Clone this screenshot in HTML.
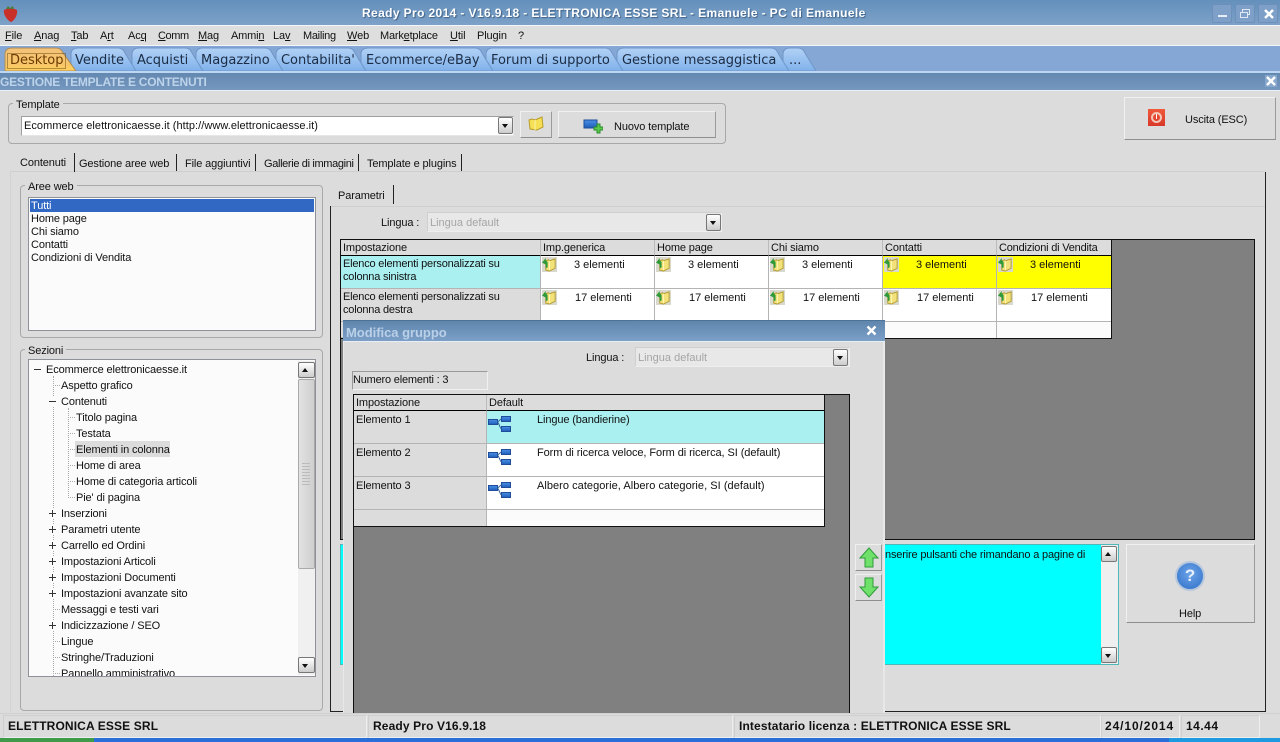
<!DOCTYPE html>
<html><head><meta charset="utf-8"><title>Ready Pro</title>
<style>
html,body{margin:0;padding:0;width:1280px;height:742px;overflow:hidden;background:#dcdcdc}
body{position:relative;font:11px/17px "Liberation Sans",Arial,sans-serif;color:#111;letter-spacing:-.12px}
div,span,svg{position:absolute;display:block;box-sizing:border-box}
.t{white-space:nowrap}
u{text-decoration:underline}
.m{top:28px}
.tl{top:53px;font:13px/16px "DejaVu Sans",sans-serif;color:#1c2c44;white-space:nowrap;letter-spacing:-.02px}
.grp{border:1px solid #a8a8a8;border-radius:4px}
.lg{background:#dcdcdc;padding:0 3px;white-space:nowrap;height:14px;line-height:17px;overflow:visible}
.btn{background:#dcdcdc;border:1px solid;border-color:#f0f0f0 #9a9a9a #8e8e8e #f0f0f0}
.combo{background:#fff;border:1px solid #a0a0a0;border-bottom-color:#e6e6e6;border-right-color:#e6e6e6}
.dd{width:15px;height:17px;border:1px solid #777;border-radius:2px;background:linear-gradient(#fff,#ccc)}
.dd:after{content:"";position:absolute;left:3px;top:6px;border:3.5px solid transparent;border-top:4px solid #111;border-bottom:0}
.ddu:after{content:"";position:absolute;left:3px;top:5px;border:3.5px solid transparent;border-bottom:4px solid #111;border-top:0}
.ddu{width:15px;height:15px;border:1px solid #777;border-radius:2px;background:linear-gradient(#fff,#ccc)}
.cell{background:#fff;border-right:1px solid #b4b4b4;border-bottom:1px solid #b4b4b4}
.hd{background:#dcdcdc;border-right:1px solid #bbb;border-bottom:1px solid #000;padding:0 0 0 2px;white-space:nowrap;line-height:15px;padding-top:1px}
.gr{background:#dcdcdc;border-right:1px solid #b4b4b4;border-bottom:1px solid #b4b4b4;padding:1px 0 0 2px;white-space:nowrap}
.wr{line-height:13px;padding-top:2px;letter-spacing:-.2px}
.tree{left:0;white-space:nowrap}
.dot{border-left:1px dotted #aaa}
.dh{border-top:1px dotted #aaa;height:1px}
.pm{width:9px;height:9px;background:#fbfbfb}
.pm:before{content:"";position:absolute;left:1px;top:4px;width:7px;height:1px;background:#333}
.pl:after{content:"";position:absolute;left:4px;top:1px;width:1px;height:7px;background:#333}
.st{top:719px;font:bold 12px/14px "Liberation Sans",sans-serif;letter-spacing:.13px;color:#111;white-space:nowrap}
.sp{top:715px;height:23px;border:1px solid #cfcfcf;border-right-color:#eee;border-bottom-color:#eee}
</style></head><body>
<svg width="0" height="0" style="left:0;top:0"><defs>
<linearGradient id="bb" x1="0" x2="0" y1="0" y2="1"><stop offset="0" stop-color="#4a90e6"/><stop offset="1" stop-color="#1f5cb8"/></linearGradient>
<symbol id="fld" viewBox="0 0 16 16"><rect width="16" height="16" fill="#d8d8cc"/><path d="M4 14V4l3-1 1 1 6-2v10l-6 3z" fill="#f3e27a" stroke="#b39a2c"/><path d="M8 4v10" stroke="#fff6b8"/><path d="M0 6l4-5v3c1 0 2 1 2 2v5l-2 1V8z" fill="#2e9a3a"/></symbol>
<symbol id="tre" viewBox="0 0 23 19"><rect x=".5" y="5.5" width="9" height="5" fill="url(#bb)" stroke="#1f4d99"/><rect x="13.5" y="2.5" width="9" height="5" fill="url(#bb)" stroke="#1f4d99"/><rect x="13.5" y="12.5" width="9" height="5" fill="url(#bb)" stroke="#1f4d99"/><path d="M9 8c2 0 3-3 4.500-3M9 8c2 0 3 7 4.500 7" stroke="#2f5f9c" fill="none"/></symbol>
</defs></svg>

<!-- title bar -->
<div style="left:0;top:0;width:1280px;height:25px;background:linear-gradient(#6390bb,#7da1c8)"></div>
<div style="left:0;top:25px;width:1280px;height:1px;background:#f2f6fa"></div>
<svg style="left:3px;top:4px" width="15" height="18" viewBox="0 0 15 18"><path d="M1 6c3-2 10-2 13 0 1 5-3 11-6 12C5 17 0 11 1 6z" fill="#c9302a"/><path d="M3 5l2-3 2 2 3-2 1 3z" fill="#4f7a3a"/></svg>
<div class="t" style="left:362px;top:6px;font:bold 12px/15px 'Liberation Sans',sans-serif;color:#fff;letter-spacing:.38px;text-shadow:1px 1px 1px #3d5f85">Ready Pro 2014 - V16.9.18 - ELETTRONICA ESSE SRL - Emanuele - PC di Emanuele</div>
<div style="left:1212px;top:4px;width:20px;height:19px;background:#7ea0c8;border:1px solid #6d90ba;border-radius:2px"><div style="left:5px;top:10px;width:9px;height:2px;background:#e8eef5"></div></div>
<div style="left:1235px;top:4px;width:20px;height:19px;background:#7ea0c8;border:1px solid #6d90ba;border-radius:2px"><div style="left:6px;top:4px;width:8px;height:6px;border:1px solid #dfe8f2"></div><div style="left:4px;top:7px;width:8px;height:6px;border:1px solid #dfe8f2;background:#7ea0c8"></div></div>
<div style="left:1258px;top:4px;width:20px;height:19px;background:#7ea0c8;border:1px solid #6d90ba;border-radius:2px"><svg style="left:5px;top:4px" width="10" height="10"><path d="M1 1l8 8M9 1l-8 8" stroke="#fff" stroke-width="2.4"/></svg></div>

<!-- menu -->
<div style="left:0;top:26px;width:1280px;height:19px;background:#dedede"></div>
<div style="left:0;top:45px;width:1280px;height:1px;background:#f2f6fa"></div>
<div class="t m" style="left:5px"><u>F</u>ile</div>
<div class="t m" style="left:34px"><u>A</u>nag</div>
<div class="t m" style="left:71px"><u>T</u>ab</div>
<div class="t m" style="left:100px">A<u>r</u>t</div>
<div class="t m" style="left:128px">Ac<u>q</u></div>
<div class="t m" style="left:158px;letter-spacing:-.4px"><u>C</u>omm</div>
<div class="t m" style="left:198px"><u>M</u>ag</div>
<div class="t m" style="left:231px;letter-spacing:-.2px">Ammi<u>n</u></div>
<div class="t m" style="left:273px">La<u>v</u></div>
<div class="t m" style="left:303px;letter-spacing:-.3px">Mailin<u>g</u></div>
<div class="t m" style="left:347px"><u>W</u>eb</div>
<div class="t m" style="left:380px;letter-spacing:-.2px">Mark<u>e</u>tplace</div>
<div class="t m" style="left:450px"><u>U</u>til</div>
<div class="t m" style="left:477px">Plugin</div>
<div class="t m" style="left:518px">?</div>

<!-- tab bar -->
<div style="left:0;top:46px;width:1280px;height:25px;background:#84a7d6"></div>
<div style="left:0;top:71px;width:1280px;height:2px;background:#bcd6f4"></div>
<svg style="left:0;top:46px" width="830" height="25" viewBox="0 0 830 25">
<defs><linearGradient id="g1" x1="0" x2="0" y1="0" y2="1"><stop offset="0" stop-color="#b2d2f6"/><stop offset="1" stop-color="#7fb1ea"/></linearGradient><linearGradient id="g2" x1="0" x2="0" y1="0" y2="1"><stop offset="0" stop-color="#f4c27a"/><stop offset=".7" stop-color="#f8c66a"/><stop offset="1" stop-color="#ffd15c"/></linearGradient></defs>
<path d="M783 25V7q1-5 7-5h8q5 0 7 5l11 18z" fill="url(#g1)" stroke="#6f96c8"/>
<path d="M617 25V7q1-5 7-5h147q5 0 7 5l11 18z" fill="url(#g1)" stroke="#6f96c8"/>
<path d="M486 25V7q1-5 7-5h112q5 0 7 5l11 18z" fill="url(#g1)" stroke="#6f96c8"/>
<path d="M361 25V7q1-5 7-5h107q5 0 7 5l11 18z" fill="url(#g1)" stroke="#6f96c8"/>
<path d="M276 25V7q1-5 7-5h65q5 0 7 5l11 18z" fill="url(#g1)" stroke="#6f96c8"/>
<path d="M196 25V7q1-5 7-5h62q5 0 7 5l11 18z" fill="url(#g1)" stroke="#6f96c8"/>
<path d="M132 25V7q1-5 7-5h46q5 0 7 5l11 18z" fill="url(#g1)" stroke="#6f96c8"/>
<path d="M71 25V7q1-5 7-5h40q5 0 7 5l11 18z" fill="url(#g1)" stroke="#6f96c8"/>
<path d="M5 25V7q1-5 7-5h44q5 0 7 5l13 18z" fill="url(#g2)" stroke="#b08d55"/>
<rect x="7.500" y="7.500" width="58" height="15" fill="none" stroke="#6b4a10" stroke-dasharray="1 1"/>
</svg>
<div class="tl" style="left:10px;color:#6a3b00">Desktop</div>
<div class="tl" style="left:75px">Vendite</div>
<div class="tl" style="left:137px">Acquisti</div>
<div class="tl" style="left:201px">Magazzino</div>
<div class="tl" style="left:281px">Contabilita'</div>
<div class="tl" style="left:366px">Ecommerce/eBay</div>
<div class="tl" style="left:491px">Forum di supporto</div>
<div class="tl" style="left:622px">Gestione messaggistica</div>
<div class="tl" style="left:789px">...</div>

<!-- header -->
<div style="left:0;top:73px;width:1280px;height:17px;background:linear-gradient(#6388b0,#7597bf)"></div>
<div style="left:0;top:90px;width:1280px;height:1px;background:#e8eef5"></div>
<div class="t" style="left:0;top:75px;font:bold 12px/14px 'Liberation Sans',sans-serif;color:#bdd3ea;letter-spacing:-.25px">GESTIONE TEMPLATE E CONTENUTI</div>
<div style="left:1265px;top:75px;width:12px;height:12px;background:#87a7cd"><svg style="left:1px;top:1px" width="10" height="10"><path d="M1 1l8 8M9 1l-8 8" stroke="#fff" stroke-width="2.4"/></svg></div>

<!-- template group -->
<div class="grp" style="left:8px;top:103px;width:718px;height:41px"></div>
<div class="lg" style="left:13px;top:97px">Template</div>
<div class="combo" style="left:21px;top:116px;width:493px;height:20px"></div>
<div class="t" style="left:24px;top:118px;letter-spacing:.05px">Ecommerce elettronicaesse.it (http://www.elettronicaesse.it)</div>
<div class="dd" style="left:498px;top:117px"></div>
<div class="btn" style="left:520px;top:111px;width:32px;height:27px"></div>
<svg style="left:528px;top:115px" width="16" height="16" viewBox="0 0 16 16"><path d="M2 14l-1-9 3-1 3 1 7-3 1 10-6 3z" fill="#f5df55" stroke="#b79c2a"/><path d="M7 5v10" stroke="#fff6a8"/></svg>
<div class="btn" style="left:558px;top:111px;width:158px;height:27px"></div>
<svg style="left:583px;top:119px" width="20" height="15" viewBox="0 0 20 15"><rect x="1" y="1" width="13" height="8" fill="url(#bb)" stroke="#1f4d99"/><path d="M14 5h3v3h3v3h-3v3h-3v-3h-3V8h3z" fill="#5ccb4d" stroke="#2c8a2c"/></svg>
<div class="t" style="left:614px;top:119px">Nuovo template</div>
<div class="btn" style="left:1124px;top:97px;width:152px;height:43px"></div>
<div style="left:1148px;top:109px;width:17px;height:17px;background:linear-gradient(#f0593a,#d8382a)"><div style="left:3px;top:3px;width:11px;height:11px;border:2px solid #f4c8b8;border-radius:50%"></div><div style="left:8px;top:5px;width:1px;height:5px;background:#fff"></div></div>
<div class="t" style="left:1185px;top:112px">Uscita (ESC)</div>

<!-- main tabs -->
<div style="left:10px;top:171px;width:1255px;height:1px;background:#cfcfcf"></div>
<div class="t" style="left:20px;top:155px">Contenuti</div>
<div style="left:74px;top:153px;width:1px;height:19px;background:#222"></div>
<div class="t" style="left:79px;top:156px">Gestione aree web</div>
<div style="left:176px;top:154px;width:1px;height:17px;background:#222"></div>
<div class="t" style="left:185px;top:156px">File aggiuntivi</div>
<div style="left:255px;top:154px;width:1px;height:17px;background:#222"></div>
<div class="t" style="left:264px;top:156px;letter-spacing:-.35px">Gallerie di immagini</div>
<div style="left:358px;top:154px;width:1px;height:17px;background:#222"></div>
<div class="t" style="left:367px;top:156px">Template e plugins</div>
<div style="left:461px;top:154px;width:1px;height:17px;background:#222"></div>
<div style="left:10px;top:172px;width:1px;height:540px;background:#d2d2d2"></div>

<!-- aree web -->
<div class="grp" style="left:20px;top:185px;width:303px;height:153px"></div>
<div class="lg" style="left:25px;top:179px">Aree web</div>
<div style="left:28px;top:197px;width:288px;height:134px;background:#fbfbfb;border:1px solid #8e9298"></div>
<div style="left:30px;top:199px;width:284px;height:13px;background:#3068c4"></div>
<div class="t" style="left:31px;top:198px;color:#fff">Tutti</div>
<div class="t" style="left:31px;top:211px">Home page</div>
<div class="t" style="left:31px;top:224px">Chi siamo</div>
<div class="t" style="left:31px;top:237px">Contatti</div>
<div class="t" style="left:31px;top:250px">Condizioni di Vendita</div>

<!-- sezioni -->
<div class="grp" style="left:20px;top:349px;width:303px;height:362px"></div>
<div class="lg" style="left:25px;top:343px">Sezioni</div>
<div style="left:28px;top:359px;width:288px;height:318px;background:#fbfbfb;border:1px solid #8e9298;overflow:hidden">
 <div class="dot" style="left:24px;top:16px;width:1px;height:304px"></div>
 <div class="dot" style="left:39px;top:48px;width:1px;height:88px"></div>
 <div class="dh" style="left:24px;top:25px;width:7px"></div>
 <div class="dh" style="left:39px;top:57px;width:7px"></div><div class="dh" style="left:39px;top:73px;width:7px"></div><div class="dh" style="left:39px;top:89px;width:7px"></div><div class="dh" style="left:39px;top:105px;width:7px"></div><div class="dh" style="left:39px;top:121px;width:7px"></div><div class="dh" style="left:39px;top:137px;width:7px"></div>
 <div class="dh" style="left:24px;top:249px;width:7px"></div><div class="dh" style="left:24px;top:281px;width:7px"></div><div class="dh" style="left:24px;top:297px;width:7px"></div><div class="dh" style="left:24px;top:313px;width:7px"></div>
 <div class="pm" style="left:4px;top:5px"></div>
 <div class="pm" style="left:19px;top:37px"></div>
 <div class="pm pl" style="left:19px;top:149px"></div><div class="pm pl" style="left:19px;top:165px"></div><div class="pm pl" style="left:19px;top:181px"></div><div class="pm pl" style="left:19px;top:197px"></div><div class="pm pl" style="left:19px;top:213px"></div><div class="pm pl" style="left:19px;top:229px"></div><div class="pm pl" style="left:19px;top:261px"></div>
 <div style="left:46px;top:81px;width:95px;height:16px;background:#dcdcdc"></div>
 <div class="tree" style="left:17px;top:2px">Ecommerce elettronicaesse.it</div>
 <div class="tree" style="left:32px;top:18px">Aspetto grafico</div>
 <div class="tree" style="left:32px;top:34px">Contenuti</div>
 <div class="tree" style="left:47px;top:50px">Titolo pagina</div>
 <div class="tree" style="left:47px;top:66px">Testata</div>
 <div class="tree" style="left:47px;top:82px">Elementi in colonna</div>
 <div class="tree" style="left:47px;top:98px">Home di area</div>
 <div class="tree" style="left:47px;top:114px">Home di categoria articoli</div>
 <div class="tree" style="left:47px;top:130px">Pie' di pagina</div>
 <div class="tree" style="left:32px;top:146px">Inserzioni</div>
 <div class="tree" style="left:32px;top:162px">Parametri utente</div>
 <div class="tree" style="left:32px;top:178px">Carrello ed Ordini</div>
 <div class="tree" style="left:32px;top:194px">Impostazioni Articoli</div>
 <div class="tree" style="left:32px;top:210px">Impostazioni Documenti</div>
 <div class="tree" style="left:32px;top:226px">Impostazioni avanzate sito</div>
 <div class="tree" style="left:32px;top:242px">Messaggi e testi vari</div>
 <div class="tree" style="left:32px;top:258px">Indicizzazione / SEO</div>
 <div class="tree" style="left:32px;top:274px">Lingue</div>
 <div class="tree" style="left:32px;top:290px">Stringhe/Traduzioni</div>
 <div class="tree" style="left:32px;top:306px">Pannello amministrativo</div>
 <div style="left:269px;top:1px;width:17px;height:314px;background:#f0f0f0"></div>
 <div class="ddu" style="left:269px;top:2px;width:17px;height:16px"></div>
 <div style="left:269px;top:19px;width:17px;height:190px;background:linear-gradient(90deg,#e2e2e2,#cfcfcf);border:1px solid #aaa;border-radius:2px"></div>
 <div style="left:273px;top:103px;width:8px;height:24px;background:repeating-linear-gradient(#bbb 0 1px,transparent 1px 3px)"></div>
 <div class="dd" style="left:269px;top:297px;width:17px;height:16px"></div>
</div>

<!-- right panel -->
<div style="left:330px;top:206px;width:1px;height:506px;background:#222"></div>
<div style="left:330px;top:711px;width:936px;height:1px;background:#222"></div>
<div style="left:1265px;top:172px;width:1px;height:540px;background:#222"></div>
<div style="left:331px;top:206px;width:934px;height:1px;background:#cfcfcf"></div>
<div class="t" style="left:338px;top:188px">Parametri</div>
<div style="left:393px;top:185px;width:1px;height:19px;background:#222"></div>
<div class="t" style="left:381px;top:215px">Lingua :</div>
<div style="left:427px;top:212px;width:295px;height:20px;background:#e8e8e8;border:1px solid;border-color:#cfcfcf #eee #eee #cfcfcf"></div>
<div class="t" style="left:430px;top:215px;color:#a5a5a5;letter-spacing:0">Lingua default</div>
<div class="dd" style="left:706px;top:214px"></div>

<!-- grid 1 -->
<div style="left:340px;top:239px;width:915px;height:301px;background:#808080;border:1px solid #111"></div>
<div style="left:341px;top:240px;width:771px;height:99px;background:#dcdcdc;border-right:1px solid #111;border-bottom:1px solid #111"></div>
<div class="hd" style="left:341px;top:240px;width:200px;height:16px">Impostazione</div>
<div class="hd" style="left:541px;top:240px;width:114px;height:16px">Imp.generica</div>
<div class="hd" style="left:655px;top:240px;width:114px;height:16px">Home page</div>
<div class="hd" style="left:769px;top:240px;width:114px;height:16px">Chi siamo</div>
<div class="hd" style="left:883px;top:240px;width:114px;height:16px">Contatti</div>
<div class="hd" style="left:997px;top:240px;width:114px;height:16px;border-right:0;letter-spacing:-.2px">Condizioni di Vendita</div>

<div class="gr wr" style="left:341px;top:256px;width:200px;height:33px;background:#aaf0f0">Elenco elementi personalizzati su<br>colonna sinistra</div>
<div class="gr wr" style="left:341px;top:289px;width:200px;height:33px">Elenco elementi personalizzati su<br>colonna destra</div>
<div class="gr" style="left:341px;top:322px;width:200px;height:16px"></div>

<div class="cell" style="left:541px;top:256px;width:114px;height:33px"></div>
<div class="cell" style="left:655px;top:256px;width:114px;height:33px"></div>
<div class="cell" style="left:769px;top:256px;width:114px;height:33px"></div>
<div class="cell" style="left:883px;top:256px;width:114px;height:33px;background:#ffff00"></div>
<div class="cell" style="left:997px;top:256px;width:114px;height:33px;background:#ffff00;border-right:0"></div>
<div class="cell" style="left:541px;top:289px;width:114px;height:33px"></div>
<div class="cell" style="left:655px;top:289px;width:114px;height:33px"></div>
<div class="cell" style="left:769px;top:289px;width:114px;height:33px"></div>
<div class="cell" style="left:883px;top:289px;width:114px;height:33px"></div>
<div class="cell" style="left:997px;top:289px;width:114px;height:33px;border-right:0"></div>
<div class="cell" style="left:541px;top:322px;width:114px;height:16px;background:#fbfbfb;border-bottom:0"></div>
<div class="cell" style="left:655px;top:322px;width:114px;height:16px;background:#fbfbfb;border-bottom:0"></div>
<div class="cell" style="left:769px;top:322px;width:114px;height:16px;background:#fbfbfb;border-bottom:0"></div>
<div class="cell" style="left:883px;top:322px;width:114px;height:16px;background:#fbfbfb;border-bottom:0"></div>
<div class="cell" style="left:997px;top:322px;width:114px;height:16px;background:#fbfbfb;border:0"></div>

<svg style="left:542px;top:257px" width="15" height="15"><use href="#fld"/></svg>
<svg style="left:656px;top:257px" width="15" height="15"><use href="#fld"/></svg>
<svg style="left:770px;top:257px" width="15" height="15"><use href="#fld"/></svg>
<svg style="left:884px;top:257px" width="15" height="15"><use href="#fld"/></svg>
<svg style="left:998px;top:257px" width="15" height="15"><use href="#fld"/></svg>
<svg style="left:542px;top:290px" width="15" height="15"><use href="#fld"/></svg>
<svg style="left:656px;top:290px" width="15" height="15"><use href="#fld"/></svg>
<svg style="left:770px;top:290px" width="15" height="15"><use href="#fld"/></svg>
<svg style="left:884px;top:290px" width="15" height="15"><use href="#fld"/></svg>
<svg style="left:998px;top:290px" width="15" height="15"><use href="#fld"/></svg>
<div class="t" style="left:574px;top:257px;letter-spacing:0">3 elementi</div>
<div class="t" style="left:688px;top:257px;letter-spacing:0">3 elementi</div>
<div class="t" style="left:802px;top:257px;letter-spacing:0">3 elementi</div>
<div class="t" style="left:916px;top:257px;letter-spacing:0">3 elementi</div>
<div class="t" style="left:1030px;top:257px;letter-spacing:0">3 elementi</div>
<div class="t" style="left:575px;top:290px;letter-spacing:0">17 elementi</div>
<div class="t" style="left:689px;top:290px;letter-spacing:0">17 elementi</div>
<div class="t" style="left:803px;top:290px;letter-spacing:0">17 elementi</div>
<div class="t" style="left:917px;top:290px;letter-spacing:0">17 elementi</div>
<div class="t" style="left:1031px;top:290px;letter-spacing:0">17 elementi</div>

<!-- cyan description -->
<div style="left:340px;top:544px;width:779px;height:121px;background:#00ffff;border:1px solid #4fb8b8"></div>
<div class="t" style="left:885px;top:547px;letter-spacing:-.17px">nserire pulsanti che rimandano a pagine di</div>
<div style="left:1101px;top:545px;width:17px;height:119px;background:#efefef"></div>
<div class="ddu" style="left:1101px;top:546px;width:16px;height:16px"></div>
<div class="dd" style="left:1101px;top:647px;width:16px;height:16px"></div>
<div class="btn" style="left:1126px;top:544px;width:129px;height:79px"></div>
<div style="left:1175px;top:561px;width:30px;height:30px;border-radius:50%;background:radial-gradient(circle at 50% 40%,#6da4e8,#2e6fc8);border:2px solid #b8c8dc"></div>
<div class="t" style="left:1175px;top:561px;width:30px;text-align:center;font:bold 17px/30px 'Liberation Sans',sans-serif;color:#e8f0fa">?</div>
<div class="t" style="left:1179px;top:606px">Help</div>

<!-- dialog -->
<div style="left:343px;top:320px;width:542px;height:394px;background:#dcdcdc;border-left:1px solid #e8e8e8;border-right:2px solid #e8e8e8"></div>
<div style="left:343px;top:320px;width:542px;height:21px;background:linear-gradient(#5f86ad,#7c9fc8);border-top:1px solid #4d7296"></div>
<div style="left:343px;top:341px;width:542px;height:1px;background:#e8eef5"></div>
<div class="t" style="left:346px;top:325px;font:bold 13px/16px 'Liberation Sans',sans-serif;color:#b9d0e8;letter-spacing:-.03px">Modifica gruppo</div>
<div style="left:866px;top:325px;width:11px;height:11px"><svg width="11" height="11"><path d="M1.500 1.500l8 8M9.500 1.500l-8 8" stroke="#fff" stroke-width="2.4"/></svg></div>
<div class="t" style="left:586px;top:350px">Lingua :</div>
<div style="left:635px;top:347px;width:215px;height:20px;background:#e8e8e8;border:1px solid;border-color:#cfcfcf #eee #eee #cfcfcf"></div>
<div class="t" style="left:638px;top:350px;color:#a5a5a5;letter-spacing:0">Lingua default</div>
<div class="dd" style="left:833px;top:349px"></div>
<div style="left:352px;top:371px;width:136px;height:19px;border:1px solid;border-color:#9a9a9a #f0f0f0 #f0f0f0 #9a9a9a"></div>
<div class="t" style="left:353px;top:372px;letter-spacing:-.2px">Numero elementi : 3</div>

<div style="left:353px;top:394px;width:497px;height:320px;background:#808080;border:1px solid #111;border-bottom:0"></div>
<div style="left:354px;top:395px;width:471px;height:132px;background:#dcdcdc;border-right:1px solid #111;border-bottom:1px solid #111"></div>
<div class="hd" style="left:354px;top:395px;width:133px;height:16px">Impostazione</div>
<div class="hd" style="left:487px;top:395px;width:337px;height:16px;border-right:0">Default</div>
<div class="gr" style="left:354px;top:411px;width:133px;height:33px">Elemento 1</div>
<div class="gr" style="left:354px;top:444px;width:133px;height:33px">Elemento 2</div>
<div class="gr" style="left:354px;top:477px;width:133px;height:33px">Elemento 3</div>
<div class="gr" style="left:354px;top:510px;width:133px;height:16px;border-bottom:0"></div>
<div class="cell" style="left:487px;top:411px;width:337px;height:33px;background:#aaf0f0;border-right:0"></div>
<div class="cell" style="left:487px;top:444px;width:337px;height:33px;border-right:0"></div>
<div class="cell" style="left:487px;top:477px;width:337px;height:33px;border-right:0"></div>
<div style="left:487px;top:510px;width:337px;height:16px;background:#fbfbfb"></div>
<svg style="left:488px;top:414px" width="23" height="19"><use href="#tre"/></svg>
<svg style="left:488px;top:447px" width="23" height="19"><use href="#tre"/></svg>
<svg style="left:488px;top:480px" width="23" height="19"><use href="#tre"/></svg>
<div class="t" style="left:537px;top:412px">Lingue (bandierine)</div>
<div class="t" style="left:537px;top:445px;letter-spacing:-.08px">Form di ricerca veloce, Form di ricerca, SI (default)</div>
<div class="t" style="left:537px;top:478px;letter-spacing:.04px">Albero categorie, Albero categorie, SI (default)</div>

<div class="btn" style="left:855px;top:544px;width:27px;height:27px"></div>
<div class="btn" style="left:855px;top:574px;width:27px;height:27px"></div>
<svg style="left:858px;top:546px" width="22" height="23" viewBox="0 0 22 23"><path d="M11 2l9 10h-5v9H7v-9H2z" fill="#6fe06a" stroke="#2f9a3a"/></svg>
<svg style="left:858px;top:576px" width="22" height="23" viewBox="0 0 22 23"><path d="M7 2h8v9h5l-9 10L2 11h5z" fill="#6fe06a" stroke="#2f9a3a"/></svg>

<!-- status bar -->
<div style="left:0;top:713px;width:1280px;height:26px;background:#dcdcdc;border-top:1px solid #d0d0d0"></div>
<div class="sp" style="left:3px;width:364px"></div>
<div class="sp" style="left:368px;width:365px"></div>
<div class="sp" style="left:734px;width:367px"></div>
<div class="sp" style="left:1101px;width:79px"></div>
<div class="sp" style="left:1181px;width:79px"></div>
<div class="st" style="left:8px">ELETTRONICA ESSE SRL</div>
<div class="st" style="left:373px">Ready Pro V16.9.18</div>
<div class="st" style="left:739px">Intestatario licenza : ELETTRONICA ESSE SRL</div>
<div class="st" style="left:1105px;letter-spacing:.9px">24/10/2014</div>
<div class="st" style="left:1186px;letter-spacing:.5px">14.44</div>
<div style="left:0;top:738px;width:1280px;height:4px;background:#2a6fd8"></div>
<div style="left:0;top:738px;width:94px;height:4px;background:#3f9a4a"></div>
<div style="left:1169px;top:738px;width:111px;height:4px;background:#1f9ae0"></div>
</body></html>
